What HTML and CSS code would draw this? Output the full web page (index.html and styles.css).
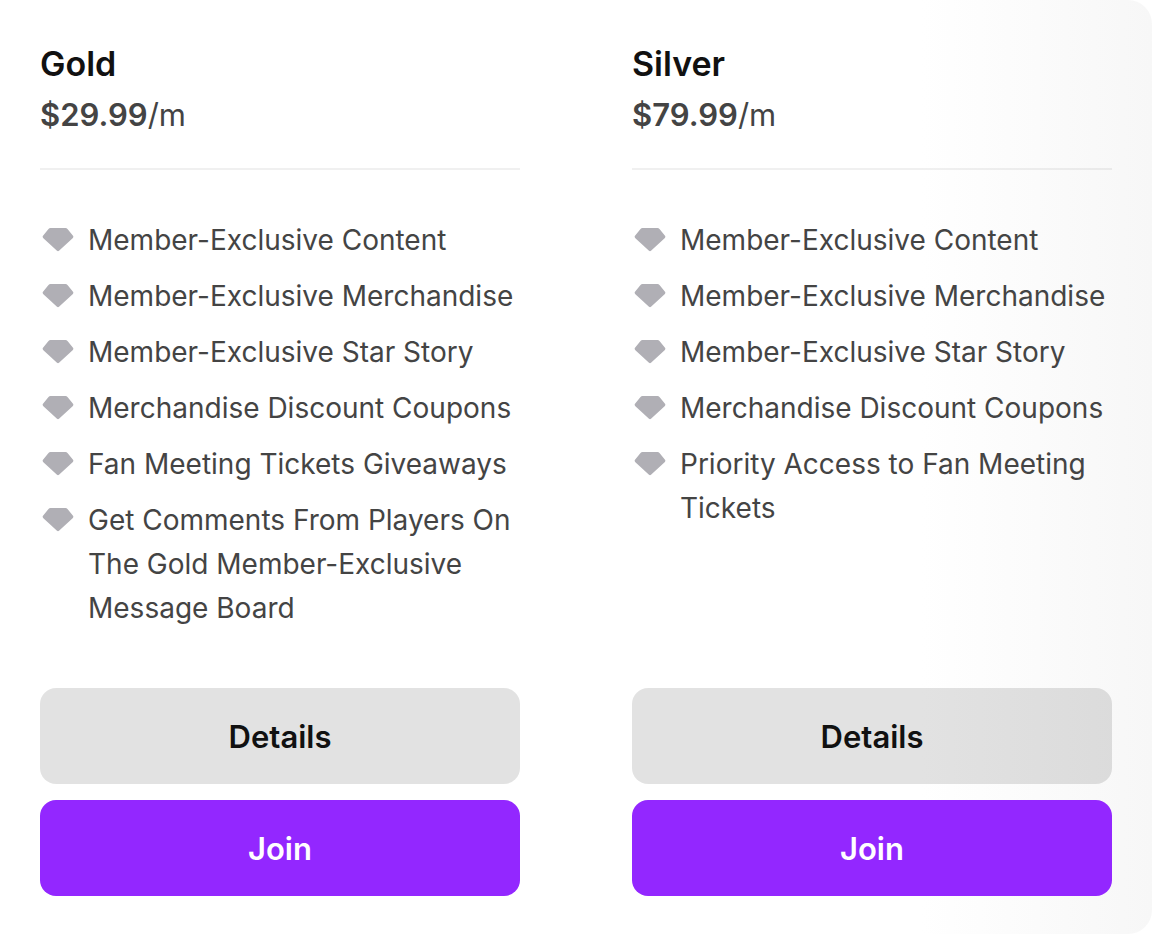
FILE: index.html
```html
<!DOCTYPE html>
<html lang="en">
<head>
  <meta charset="utf-8">
  <title>Membership Plans</title>
  <link rel="stylesheet" href="styles.css">
</head>
<body>
  <svg class="sprite" aria-hidden="true">
    <symbol id="gem" viewBox="0 0 32 24">
      <path d="M8.500 0h15q1.200 0 2 .9l5.500 6.800q.9 1.100-.1 2.200L17 22.800q-1 .9-2 0L1.100 9.900Q.1 8.800 1 7.700L6.500.9Q7.300 0 8.500 0z"/>
    </symbol>
  </svg>

  <main class="plans">
    <section class="plan">
      <header class="plan-header">
        <h2>Gold</h2>
        <p class="price"><strong>$29.99</strong>/m</p>
      </header>
      <ul class="benefits">
        <li><svg class="gem"><use href="#gem"/></svg><span>Member-Exclusive Content</span></li>
        <li><svg class="gem"><use href="#gem"/></svg><span>Member-Exclusive Merchandise</span></li>
        <li><svg class="gem"><use href="#gem"/></svg><span>Member-Exclusive Star Story</span></li>
        <li><svg class="gem"><use href="#gem"/></svg><span>Merchandise Discount Coupons</span></li>
        <li><svg class="gem"><use href="#gem"/></svg><span>Fan Meeting Tickets Giveaways</span></li>
        <li><svg class="gem"><use href="#gem"/></svg><span>Get Comments From Players On The Gold Member-Exclusive Message Board</span></li>
      </ul>
      <div class="actions">
        <button type="button" class="btn btn-details">Details</button>
        <button type="button" class="btn btn-join">Join</button>
      </div>
    </section>

    <section class="plan">
      <header class="plan-header">
        <h2>Silver</h2>
        <p class="price"><strong>$79.99</strong>/m</p>
      </header>
      <ul class="benefits">
        <li><svg class="gem"><use href="#gem"/></svg><span>Member-Exclusive Content</span></li>
        <li><svg class="gem"><use href="#gem"/></svg><span>Member-Exclusive Merchandise</span></li>
        <li><svg class="gem"><use href="#gem"/></svg><span>Member-Exclusive Star Story</span></li>
        <li><svg class="gem"><use href="#gem"/></svg><span>Merchandise Discount Coupons</span></li>
        <li><svg class="gem"><use href="#gem"/></svg><span>Priority Access to Fan Meeting Tickets</span></li>
      </ul>
      <div class="actions">
        <button type="button" class="btn btn-details">Details</button>
        <button type="button" class="btn btn-join">Join</button>
      </div>
    </section>
  </main>
</body>
</html>
```
FILE: styles.css
```css
* {
  box-sizing: border-box;
}

body {
  margin: 0;
  background-color: #fff;
  font-family: Inter, "Liberation Sans", sans-serif;
  color: #444;
}

.sprite {
  position: absolute;
  width: 0;
  height: 0;
}

.plans {
  display: grid;
  grid-template-columns: 1fr 1fr;
  gap: 112px;
  padding: 40px 40px 38px;
  border-radius: 24px;
  background: linear-gradient(to right, #fff 80%, #f7f7f7);
}

.plan {
  display: flex;
  flex-direction: column;
}

.plan-header {
  padding-bottom: 26px;
  border-bottom: 2px solid rgba(0, 0, 0, 0.06);
}

h2 {
  margin: 0;
  font-size: 34px;
  line-height: 48px;
  font-weight: 600;
  color: #111;
}

.price {
  margin: 0;
  font-size: 31px;
  line-height: 54px;
}

.price strong {
  font-weight: 600;
}

.benefits {
  display: flex;
  flex-direction: column;
  gap: 12px;
  margin: 0;
  padding: 48px 0 58px;
  list-style: none;
  font-size: 28px;
  line-height: 44px;
}

.benefits li {
  display: flex;
  gap: 14px;
}

.gem {
  flex: none;
  width: 32px;
  height: 24px;
  margin: 10px 0 0 2px;
  fill: #b0afb5;
}

.actions {
  display: grid;
  gap: 16px;
  margin-top: auto;
}

.btn {
  height: 96px;
  border: none;
  border-radius: 16px;
  font-family: inherit;
  font-size: 31px;
  font-weight: 600;
  cursor: pointer;
}

.btn-details {
  background-color: rgba(0, 0, 0, 0.115);
  color: #111;
}

.btn-join {
  background-color: #9327ff;
  color: #fff;
}
```
